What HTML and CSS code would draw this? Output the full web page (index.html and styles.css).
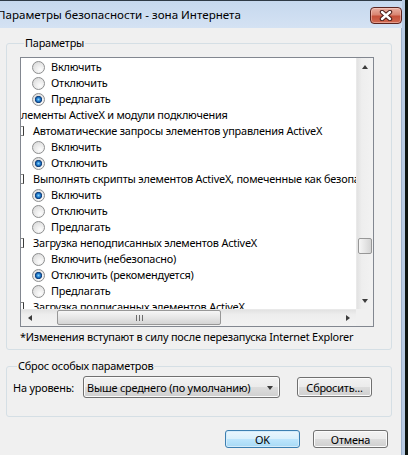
FILE: index.html
```html
<!DOCTYPE html>
<html lang="ru">
<head>
<meta charset="utf-8">
<title>Параметры безопасности - зона Интернета</title>
<link rel="stylesheet" href="styles.css">
</head>
<body>
<div class="window">
  <div class="titlebar">
    <span class="title">Параметры безопасности - зона Интернета</span>
    <span class="close">
      <svg width="14" height="11" viewBox="0 0 14 11">
        <path d="M3 2 L11 9 M11 2 L3 9" stroke="#4a1c18" stroke-width="4.4" stroke-linecap="round"/>
        <path d="M3 2 L11 9 M11 2 L3 9" stroke="#ffffff" stroke-width="2.4" stroke-linecap="round"/>
      </svg>
    </span>
  </div>
  <div class="client">
    <div class="group group-params">
      <div class="group-title">Параметры</div>
      <div class="listbox">
        <div class="list-main">
          <div class="viewport">
            <div class="row opt"><span class="radio"></span>Включить</div>
            <div class="row opt"><span class="radio"></span>Отключить</div>
            <div class="row opt"><span class="radio on"></span>Предлагать</div>
            <div class="row cat1">лементы ActiveX и модули подключения</div>
            <div class="row cat2"><span class="cat-icon"></span>Автоматические запросы элементов управления ActiveX</div>
            <div class="row opt"><span class="radio"></span>Включить</div>
            <div class="row opt"><span class="radio on"></span>Отключить</div>
            <div class="row cat2"><span class="cat-icon"></span>Выполнять скрипты элементов ActiveX, помеченные как безопасные</div>
            <div class="row opt"><span class="radio on"></span>Включить</div>
            <div class="row opt"><span class="radio"></span>Отключить</div>
            <div class="row opt"><span class="radio"></span>Предлагать</div>
            <div class="row cat2"><span class="cat-icon"></span>Загрузка неподписанных элементов ActiveX</div>
            <div class="row opt"><span class="radio"></span>Включить (небезопасно)</div>
            <div class="row opt"><span class="radio on"></span>Отключить (рекомендуется)</div>
            <div class="row opt"><span class="radio"></span>Предлагать</div>
            <div class="row cat2"><span class="cat-icon"></span>Загрузка подписанных элементов ActiveX</div>
          </div>
          <div class="vscroll">
            <span class="sb-btn"><span class="tri up"></span></span>
            <div class="vtrack"><span class="vthumb"></span></div>
            <span class="sb-btn"><span class="tri down"></span></span>
          </div>
        </div>
        <div class="list-bottom">
          <div class="hscroll">
            <span class="sb-btn"><span class="tri left"></span></span>
            <div class="htrack"><span class="hthumb"><span class="grip"></span></span></div>
            <span class="sb-btn"><span class="tri right"></span></span>
          </div>
          <div class="corner"></div>
        </div>
      </div>
      <p class="note">*Изменения вступают в силу после перезапуска Internet Explorer</p>
    </div>

    <div class="group group-reset">
      <div class="group-title">Сброс особых параметров</div>
      <div class="reset-row">
        <span class="label">На уровень:</span>
        <div class="combo">
          <span class="combo-text">Выше среднего (по умолчанию)</span>
          <span class="tri down combo-arrow"></span>
        </div>
        <span class="btn btn-reset">Сбросить...</span>
      </div>
    </div>

    <div class="footer">
      <span class="btn btn-default">OK</span>
      <span class="btn">Отмена</span>
    </div>
  </div>
</div>
</body>
</html>
```

FILE: styles.css
```css
* { box-sizing: border-box; }
html, body { margin: 0; padding: 0; }
body {
  width: 408px;
  height: 455px;
  overflow: hidden;
  background: #0e1612;
  font-family: "Noto Sans", "Open Sans", sans-serif;
  font-size: 10.9px;
  letter-spacing: -0.2px;
  color: #000;
}
.window {
  width: 405px;
  height: 455px;
  display: flex;
  flex-direction: column;
  background: #c8d9ee;
  border-right: 3px solid #b8cbe3;
}

/* title bar */
.titlebar {
  height: 28px;
  flex: none;
  display: flex;
  align-items: center;
  justify-content: space-between;
  border-top: 1px solid #2e3a46;
  background: linear-gradient(#c6d8ee, #d4e2f3);
  overflow: hidden;
}
.title {
  margin-left: -3px;
  font-size: 11.6px;
  letter-spacing: 0;
  white-space: nowrap;
  line-height: 18px;
}
.close {
  width: 32px;
  height: 17px;
  margin-top: 2px;
  border: 1px solid #5a2420;
  border-radius: 4px;
  background: linear-gradient(#eab0a3 0%, #d98572 45%, #c5503a 55%, #d06a52 100%);
  box-shadow: inset 0 0 0 1px rgba(255, 220, 210, 0.45);
  display: flex;
  align-items: center;
  justify-content: center;
}

/* client */
.client {
  flex: 1;
  background: #f0f0f0;
  border-right: 1px solid #9fb3cc;
  display: flex;
  flex-direction: column;
}
.group {
  border: 1px solid #d5dfe5;
  border-radius: 3px;
  margin-left: 6px;
  width: 386px;
}
.group-title {
  width: fit-content;
  margin: -9px 0 0 4px;
  padding: 0 1px;
  background: #f0f0f0;
  line-height: 16px;
  white-space: nowrap;
}
.group-params {
  margin-top: 15px;
  padding: 0 17px 4px 13px;
}

/* list box */
.listbox {
  margin-top: 6px;
  width: 354px;
  height: 270px;
  border: 1px solid #828790;
  background: #fff;
  display: flex;
  flex-direction: column;
}
.list-main {
  display: flex;
  height: 251px;
}
.viewport {
  width: 335px;
  height: 251px;
  overflow: hidden;
  padding-top: 1px;
}
.row {
  height: 16px;
  line-height: 16px;
  white-space: nowrap;
  display: flex;
  align-items: center;
}
.row.opt { padding-left: 11px; }
.radio {
  width: 13px;
  height: 13px;
  flex: none;
  margin-right: 6px;
  border-radius: 50%;
  border: 1px solid #8d8e8f;
  background: radial-gradient(circle at 65% 70%, #fdfdfd 0, #ebebeb 45%, #d3d3d3 100%);
}
.radio.on {
  background:
    radial-gradient(circle at 50% 50%, #8fd2f8 0, #2c8ad8 1.6px, #0f4f98 2.8px, #1c3f70 3.4px, rgba(0,0,0,0) 3.9px),
    radial-gradient(circle at 65% 70%, #fdfdfd 0, #ebebeb 45%, #d3d3d3 100%);
}
.cat-icon {
  width: 3px;
  height: 10px;
  flex: none;
  margin-right: 9px;
  background: #fff;
  border: 1px solid #8a8a8a;
  border-left: none;
  border-right-color: #3c3c3c;
}

/* scrollbars */
.vscroll {
  width: 17px;
  height: 251px;
  display: flex;
  flex-direction: column;
  background: linear-gradient(to right, #e2e2e2, #eeeeee 30%, #f2f2f2);
  border-left: 1px solid #e9e9e9;
}
.sb-btn {
  width: 17px;
  height: 17px;
  flex: none;
  display: flex;
  align-items: center;
  justify-content: center;
}
.vscroll .sb-btn { width: 16px; }
.vtrack {
  flex: 1;
  padding-top: 163px;
  padding-left: 1px;
}
.vthumb {
  display: block;
  width: 14px;
  height: 16px;
  border: 1px solid #979797;
  border-radius: 2px;
  background: linear-gradient(to right, #f6f6f6, #e6e6e6 50%, #d4d4d4);
}
.tri {
  width: 0;
  height: 0;
  border-style: solid;
  border-color: transparent;
}
.tri.up { border-width: 0 3.5px 4px 3.5px; border-bottom-color: #3c3c3c; }
.tri.down { border-width: 4px 3.5px 0 3.5px; border-top-color: #3c3c3c; }
.tri.left { border-width: 3.5px 4px 3.5px 0; border-right-color: #3c3c3c; }
.tri.right { border-width: 3.5px 0 3.5px 4px; border-left-color: #3c3c3c; }

.list-bottom {
  display: flex;
  height: 17px;
}
.hscroll {
  width: 335px;
  height: 17px;
  display: flex;
  background: linear-gradient(#e2e2e2, #eeeeee 30%, #f2f2f2);
  border-top: 1px solid #e9e9e9;
}
.hscroll .sb-btn { height: 16px; }
.htrack {
  flex: 1;
  padding-left: 19px;
}
.hthumb {
  display: flex;
  align-items: center;
  justify-content: center;
  width: 164px;
  height: 15px;
  border: 1px solid #979797;
  border-radius: 2px;
  background: linear-gradient(#f6f6f6, #e6e6e6 50%, #d4d4d4);
}
.grip {
  width: 7px;
  height: 6px;
  background: repeating-linear-gradient(to right, #6c6c6c 0 1px, transparent 1px 3px);
}
.corner {
  width: 17px;
  height: 17px;
  background: #f0f0f0;
}

.note {
  margin: 2px 0 0;
  line-height: 16px;
  white-space: nowrap;
}

/* reset group */
.group-reset {
  margin-top: 16px;
  padding: 0 0 18px 6px;
}
.reset-row {
  margin-top: 2px;
  display: flex;
  align-items: center;
  height: 22px;
}
.label { width: 70px; white-space: nowrap; }
.combo {
  width: 197px;
  height: 22px;
  border: 1px solid #707070;
  border-radius: 3px;
  background: linear-gradient(#f2f2f2 0%, #ebebeb 50%, #dddddd 50%, #cfcfcf 100%);
  box-shadow: inset 0 0 0 1px #fbfbfb;
  display: flex;
  align-items: center;
  justify-content: space-between;
  padding: 0 6px 0 3px;
}
.combo-text { white-space: nowrap; }
.combo-arrow { margin-top: 1px; }
.btn {
  width: 75px;
  height: 20px;
  display: flex;
  align-items: center;
  justify-content: center;
  white-space: nowrap;
  border: 1px solid #707070;
  border-radius: 3px;
  background: linear-gradient(#f2f2f2 0%, #ebebeb 50%, #dddddd 50%, #cfcfcf 100%);
  box-shadow: inset 0 0 0 1px #fbfbfb;
}
.btn-reset { margin-left: 17px; }
.footer {
  margin-top: 13px;
  display: flex;
  justify-content: flex-end;
  gap: 13px;
  padding-right: 13px;
}
.footer .btn { height: 18px; }
.btn-default {
  border-color: #3c7fb1;
  background: linear-gradient(#eaf6fd 0%, #d9f0fc 50%, #bee6fd 50%, #a7d9f5 100%);
  box-shadow: inset 0 0 0 1px #d4ecfb;
}
```
